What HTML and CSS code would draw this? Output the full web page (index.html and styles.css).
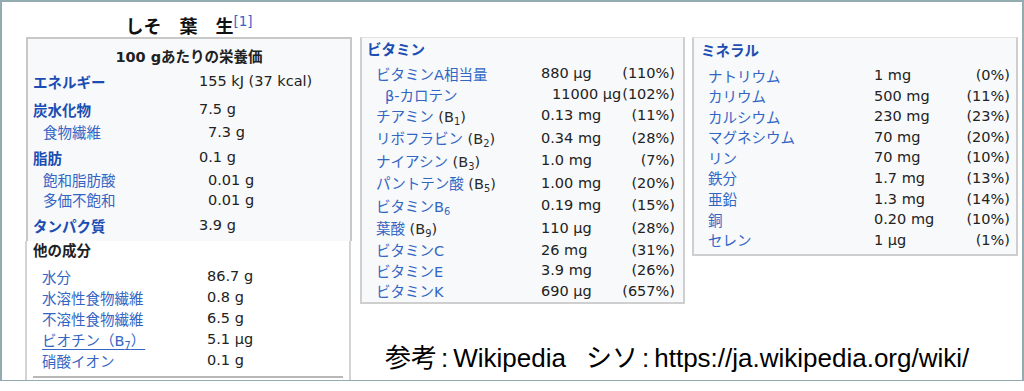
FILE: index.html
```html
<!DOCTYPE html>
<html lang="ja">
<head>
<meta charset="utf-8">
<title>しそ 葉 生</title>
<link rel="stylesheet" href="styles.css">
</head>
<body>
<div class="slide">
  <div class="left">
    <div class="title">しそ　葉　生<sup class="ref">[1]</sup></div>
    <div class="box main">
      <div class="caption">100 gあたりの栄養価</div>
      <div class="row top first"><span class="lab b">エネルギー</span><span class="val">155 kJ (37 kcal)</span></div>
      <div class="row top"><span class="lab b">炭水化物</span><span class="val">7.5 g</span></div>
      <div class="row sub"><span class="lab">食物繊維</span><span class="val">7.3 g</span></div>
      <div class="row top"><span class="lab b">脂肪</span><span class="val">0.1 g</span></div>
      <div class="row sub"><span class="lab">飽和脂肪酸</span><span class="val">0.01 g</span></div>
      <div class="row sub"><span class="lab">多価不飽和</span><span class="val">0.01 g</span></div>
      <div class="row top"><span class="lab b">タンパク質</span><span class="val">3.9 g</span></div>
    </div>
    <div class="box other">
      <div class="other-head">他の成分</div>
      <div class="orow"><span class="lab">水分</span><span class="val">86.7 g</span></div>
      <div class="orow"><span class="lab">水溶性食物繊維</span><span class="val">0.8 g</span></div>
      <div class="orow"><span class="lab">不溶性食物繊維</span><span class="val">6.5 g</span></div>
      <div class="orow"><span class="lab u">ビオチン（B<sub>7</sub>）</span><span class="val">5.1 µg</span></div>
      <div class="orow"><span class="lab">硝酸イオン</span><span class="val">0.1 g</span></div>
      <div class="rule"></div>
    </div>
  </div>
  <div class="right">
    <div class="boxes">
      <div class="box vit">
        <div class="head">ビタミン</div>
        <div class="vrow first"><span class="lab">ビタミンA相当量</span><span class="val">880 µg</span><span class="pct">(110%)</span></div>
        <div class="vrow deep"><span class="lab">β-カロテン</span><span class="val">11000 µg</span><span class="pct">(102%)</span></div>
        <div class="vrow t"><span class="lab">チアミン <span class="plain">(B<sub>1</sub>)</span></span><span class="val">0.13 mg</span><span class="pct">(11%)</span></div>
        <div class="vrow t"><span class="lab">リボフラビン <span class="plain">(B<sub>2</sub>)</span></span><span class="val">0.34 mg</span><span class="pct">(28%)</span></div>
        <div class="vrow t"><span class="lab">ナイアシン <span class="plain">(B<sub>3</sub>)</span></span><span class="val">1.0 mg</span><span class="pct">(7%)</span></div>
        <div class="vrow t"><span class="lab">パントテン酸 <span class="plain">(B<sub>5</sub>)</span></span><span class="val">1.00 mg</span><span class="pct">(20%)</span></div>
        <div class="vrow t"><span class="lab">ビタミンB<sub>6</sub></span><span class="val">0.19 mg</span><span class="pct">(15%)</span></div>
        <div class="vrow t"><span class="lab">葉酸 <span class="plain">(B<sub>9</sub>)</span></span><span class="val">110 µg</span><span class="pct">(28%)</span></div>
        <div class="vrow"><span class="lab">ビタミンC</span><span class="val">26 mg</span><span class="pct">(31%)</span></div>
        <div class="vrow"><span class="lab">ビタミンE</span><span class="val">3.9 mg</span><span class="pct">(26%)</span></div>
        <div class="vrow"><span class="lab">ビタミンK</span><span class="val">690 µg</span><span class="pct">(657%)</span></div>
      </div>
      <div class="box min">
        <div class="head">ミネラル</div>
        <div class="mrow"><span class="lab">ナトリウム</span><span class="val">1 mg</span><span class="pct">(0%)</span></div>
        <div class="mrow"><span class="lab">カリウム</span><span class="val">500 mg</span><span class="pct">(11%)</span></div>
        <div class="mrow"><span class="lab">カルシウム</span><span class="val">230 mg</span><span class="pct">(23%)</span></div>
        <div class="mrow"><span class="lab">マグネシウム</span><span class="val">70 mg</span><span class="pct">(20%)</span></div>
        <div class="mrow"><span class="lab">リン</span><span class="val">70 mg</span><span class="pct">(10%)</span></div>
        <div class="mrow"><span class="lab">鉄分</span><span class="val">1.7 mg</span><span class="pct">(13%)</span></div>
        <div class="mrow"><span class="lab">亜鉛</span><span class="val">1.3 mg</span><span class="pct">(14%)</span></div>
        <div class="mrow"><span class="lab">銅</span><span class="val">0.20 mg</span><span class="pct">(10%)</span></div>
        <div class="mrow"><span class="lab">セレン</span><span class="val">1 µg</span><span class="pct">(1%)</span></div>
      </div>
    </div>
    <p class="credit">参考<span class="colon">:</span>Wikipedia<span class="gap">　</span>シソ<span class="colon">:</span>https://ja.wikipedia.org/wiki/</p>
  </div>
</div>
</body>
</html>
```

FILE: styles.css
```css
html, body {
  margin: 0;
  padding: 0;
  background: #ffffff;
}

body {
  font-family: "DejaVu Sans", "Noto Sans CJK JP", sans-serif;
  font-size: 14.5px;
  color: #222222;
}

.slide {
  width: 1024px;
  height: 381px;
  box-sizing: border-box;
  border: 2px solid #93acb1;
  border-bottom-width: 1px;
  display: flex;
  align-items: flex-start;
  overflow: hidden;
}

/* ---------- left column ---------- */
.left {
  margin-left: 24px;
  width: 326px;
  height: 100%;
  display: flex;
  flex-direction: column;
}

.title {
  height: 35px;
  box-sizing: border-box;
  padding-top: 12px;
  line-height: 22px;
  text-align: center;
  font-family: "Noto Sans CJK JP", sans-serif;
  font-size: 18px;
  font-weight: bold;
  color: #111111;
  white-space: nowrap;
}

.ref {
  font-family: "DejaVu Sans", sans-serif;
  font-size: 13.5px;
  font-weight: normal;
  color: #3366cc;
  vertical-align: 7px;
  line-height: 0;
}

.box {
  box-sizing: border-box;
  white-space: nowrap;
}

.lab {
  color: #3366c4;
}

.lab.b {
  font-weight: bold;
  color: #1b4db3;
}

.plain {
  color: #2a2a2a;
}

.lab.u {
  text-decoration: underline;
  text-underline-offset: 3px;
}

sub {
  font-size: 0.68em;
  line-height: 0;
  vertical-align: -0.3em;
}

.main {
  background: #f8f9fa;
  border: 2px solid #c8c8c8;
  border-bottom: 0;
  padding: 8px 5px 4px 5px;
}

.caption {
  height: 20px;
  line-height: 20px;
  text-align: center;
  font-weight: bold;
  color: #202122;
}

.row {
  display: grid;
  grid-template-columns: 166px auto;
  align-items: center;
  height: 20px;
}

.row.top {
  height: 24px;
  margin-top: 4px;
}

.row.top.first {
  margin-top: 2px;
}

.row.sub .lab {
  padding-left: 10px;
}

.row.sub .val {
  padding-left: 9px;
}

.other {
  margin-left: -1px;
  width: 326px;
  flex: 1;
  background: #ffffff;
  border-left: 2px solid #d4d4d4;
  border-right: 2px solid #d4d4d4;
  padding-left: 6px;
}

.other-head {
  height: 21px;
  line-height: 21px;
  font-weight: bold;
  color: #202122;
  margin-bottom: 3.5px;
}

.orow {
  display: grid;
  grid-template-columns: 174px auto;
  align-items: center;
  height: 21px;
}

.orow .lab {
  padding-left: 9px;
}

.rule {
  margin: 5px 6px 0 0;
  border-top: 2px solid #b8b8b8;
}

/* ---------- right area ---------- */
.right {
  margin-left: 8px;
  display: flex;
  flex-direction: column;
}

.boxes {
  margin-top: 35px;
  display: flex;
  align-items: flex-start;
  gap: 7px;
}

.vit,
.min {
  background: #f8f9fa;
  border: 2px solid #cfcfcf;
  border-top: 1px solid #e2e2e2;
}

.head {
  font-weight: bold;
  color: #1b4db3;
}

.vit {
  width: 325px;
  padding: 2px 8px 1px 5px;
}

.vit .head {
  height: 20px;
  line-height: 20px;
  margin-bottom: 2.5px;
}

.vrow {
  display: grid;
  grid-template-columns: 174px 1fr auto;
  align-items: center;
  height: 20.5px;
}

.vrow.first {
  height: 21px;
}

.vrow.t {
  height: 22.5px;
}

.vrow .lab {
  padding-left: 9px;
}

.vrow.deep .lab {
  padding-left: 18px;
}

.vrow.deep .val {
  padding-left: 11px;
}

.pct {
  justify-self: end;
}

.min {
  width: 326px;
  padding: 3px 6px 4.6px 7px;
}

.min .head {
  height: 21px;
  line-height: 21px;
  margin-bottom: 2.5px;
}

.mrow {
  display: grid;
  grid-template-columns: 173px 1fr auto;
  align-items: center;
  height: 20.6px;
}

.mrow .lab {
  padding-left: 7px;
}

.credit {
  margin: 39px 0 0 25px;
  font-family: "Liberation Sans", "Noto Sans CJK JP", sans-serif;
  font-size: 26px;
  line-height: 30px;
  color: #000000;
  white-space: nowrap;
}

.credit .colon {
  margin: 0 5px 0 4px;
}

.credit .gap {
  margin-right: -6px;
}
```
